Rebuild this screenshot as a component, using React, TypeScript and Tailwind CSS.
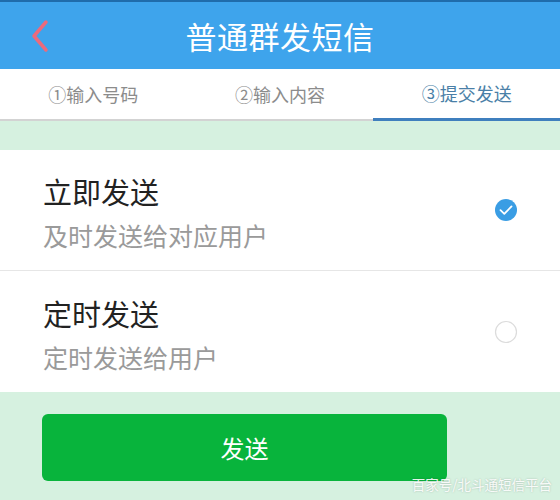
import React, { useState } from 'react';

const FONT = { fontFamily: '"Noto Sans CJK SC", "Noto Sans", sans-serif' };

const tabs = ['①输入号码', '②输入内容', '③提交发送'];

const options = [
  { title: '立即发送', desc: '及时发送给对应用户' },
  { title: '定时发送', desc: '定时发送给用户' },
];

const CheckMark: React.FC<{ checked: boolean }> = ({ checked }) =>
  checked ? (
    <svg width="24" height="24" viewBox="0 0 24 24">
      <circle cx="12" cy="12" r="11" fill="#3a9de4" />
      <path d="M6.5 12.2l3.8 3.6 7.2-7.4" fill="none" stroke="#fff" strokeWidth="1.8" strokeLinecap="round" strokeLinejoin="round" />
    </svg>
  ) : (
    <svg width="24" height="24" viewBox="0 0 24 24">
      <circle cx="12" cy="12" r="10.5" fill="#fff" stroke="#dcdcdc" strokeWidth="1.2" />
    </svg>
  );

export default function App() {
  const [selected, setSelected] = useState(0);

  return (
    <div className="w-[560px] h-[500px] overflow-hidden bg-[#d6f1e0] relative" style={FONT}>
      {/* 顶部标题栏 */}
      <div className="h-[69px] border-t-2 border-[#1f6cab] bg-[#3ea4ec] flex items-center relative">
        <div className="pl-[30px] w-[90px] flex items-center">
          <svg width="20" height="34" viewBox="0 0 20 34">
            <path d="M16 3L4 17l12 14" fill="none" stroke="#ec6a7c" strokeWidth="3.5" strokeLinecap="round" strokeLinejoin="round" />
          </svg>
        </div>
        <div className="flex-1 text-center text-white text-[31px] leading-[40px] tracking-[0.5px] pr-[90px]">
          普通群发短信
        </div>
      </div>

      {/* 步骤标签 */}
      <div className="h-[52px] bg-white grid grid-cols-3 border-b-2 border-[#d3d3d3]">
        {tabs.map((t, i) => (
          <div
            key={t}
            className={`flex items-center justify-center text-[18px] ${
              i === 2 ? 'text-[#4a7fa7] border-b-[3px] border-[#3f7fbe] -mb-[2px]' : 'text-[#8c8c8c]'
            }`}
          >
            {t}
          </div>
        ))}
      </div>

      <div className="h-[29px]" />

      {/* 发送方式 */}
      <div className="bg-white">
        {options.map((o, i) => (
          <div
            key={o.title}
            onClick={() => setSelected(i)}
            className={`h-[121px] flex items-center justify-between pl-[43px] pr-[42px] cursor-pointer ${
              i === 0 ? 'border-b border-[#e6e6e6]' : ''
            }`}
          >
            <div className="pt-[6px]">
              <div className="text-[29px] leading-[34px] text-[#222]">{o.title}</div>
              <div className="mt-[10px] text-[25px] leading-[34px] text-[#9a9a9a]">{o.desc}</div>
            </div>
            <CheckMark checked={selected === i} />
          </div>
        ))}
      </div>

      {/* 发送按钮 */}
      <div className="pt-[22px] pl-[42px]">
        <button className="w-[405px] h-[67px] rounded-[6px] bg-[#08b43c] text-white text-[24px]">
          发送
        </button>
      </div>

      <div className="absolute right-[8px] bottom-[6px] text-[13.5px] text-white/90 [text-shadow:0_0_2px_rgba(0,0,0,0.25)]">
        百家号/北斗通短信平台
      </div>
    </div>
  );
}
